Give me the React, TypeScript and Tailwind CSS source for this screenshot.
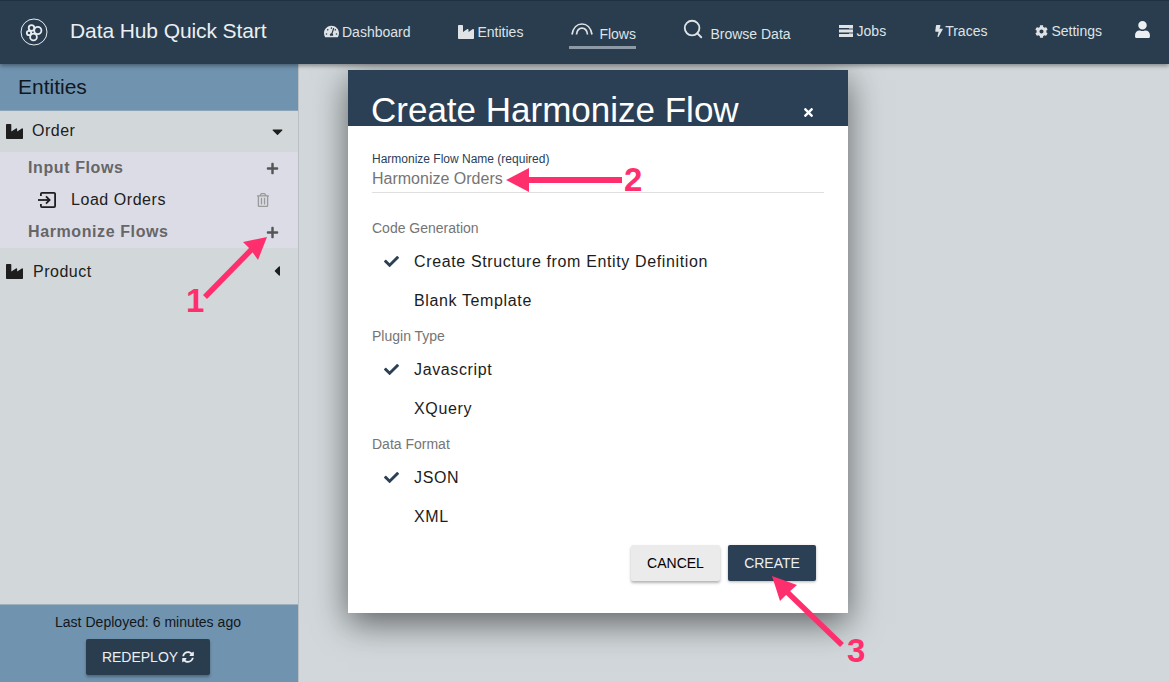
import React from "react";
import { FaTachometerAlt, FaIndustry, FaBolt, FaCog, FaUser, FaRegTrashAlt, FaPlus, FaCheck, FaTimes, FaSyncAlt, FaCaretDown, FaCaretLeft } from "react-icons/fa";
import { Search } from "lucide-react";

const Logo = () => (
  <svg width="28" height="28" viewBox="0 0 28 28" fill="none" stroke="#e8ecef">
    <circle cx="14" cy="14" r="13" strokeWidth="1" />
    <g strokeWidth="1.8">
      <circle cx="11.5" cy="10" r="2.8" />
      <circle cx="17.8" cy="12.5" r="3.6" />
      <circle cx="13.5" cy="19" r="3.4" />
      <circle cx="9" cy="15" r="2.2" />
    </g>
  </svg>
);

const Rainbow = () => (
  <svg width="22" height="12" viewBox="0 0 22 12" fill="none" stroke="#dfe3e6" strokeWidth="1.7">
    <path d="M1 11.5 C2 5 6 1 11 1 C16 1 20 5 21 11.5" />
    <path d="M5.5 11.5 C6 7.5 8 5.2 11 5.2 C14 5.2 16 7.5 16.5 11.5" />
  </svg>
);

const JobsIcon = () => (
  <svg width="14" height="12" viewBox="0 0 14 12" fill="#dfe3e6">
    <rect x="0" y="0" width="14" height="3" />
    <rect x="0" y="4.5" width="14" height="3" />
    <rect x="0" y="9" width="14" height="3" />
    <rect x="10" y="3" width="4" height="1.5" fill="#8d9aa5" />
    <rect x="10" y="7.5" width="4" height="1.5" fill="#8d9aa5" />
  </svg>
);

const LoadIcon = () => (
  <svg width="18" height="16" viewBox="0 0 18 16" fill="none" stroke="#1e1e1e" strokeWidth="1.8">
    <path d="M2.9 4 V2 A1.1 1.1 0 0 1 4 0.9 H16 A1.1 1.1 0 0 1 17.1 2 V14 A1.1 1.1 0 0 1 16 15.1 H4 A1.1 1.1 0 0 1 2.9 14 V12" />
    <path d="M0 8 H11" />
    <path d="M8 4.4 L11.6 8 L8 11.6" />
  </svg>
);

const NavText = ({ children }: { children: React.ReactNode }) => (
  <span className="block text-[14px] leading-[14px] text-[#dfe3e6]">{children}</span>
);

const Annot = ({ children, className }: { children: React.ReactNode; className: string }) => (
  <span className={`absolute font-bold text-[#ff2f6d] text-[33px] leading-none font-['Liberation_Sans',sans-serif] ${className}`}>{children}</span>
);

const Option = ({ label, checked }: { label: string; checked?: boolean }) => (
  <div className="flex items-center h-[39px]">
    <span className="w-[42px] pl-[12px] text-[#2b4055] text-[15px]">{checked && <FaCheck />}</span>
    <span className="text-[16px] tracking-[0.63px] text-[#1c1c1c]">{label}</span>
  </div>
);

const Section = ({ label }: { label: string }) => (
  <div className="text-[14px] leading-[16px] text-[#757575]">{label}</div>
);

export default function App() {
  return (
    <div className="relative w-[1169px] h-[682px] overflow-hidden flex flex-col bg-[#d1d7da] font-['Liberation_Sans',sans-serif]">
      <header className="relative z-10 h-[64px] shrink-0 flex items-center bg-[#293d4f] border-t border-[#1f3040] shadow-[0_2px_4px_rgba(0,0,0,0.35)]">
        <div className="ml-[20px] w-[50px] -mt-[2px]"><Logo /></div>
        <div className="w-[254px] text-[21px] leading-none text-[#eceff1] tracking-[-0.1px] -mt-[4px]">Data Hub Quick Start</div>
        <nav className="flex items-start self-stretch gap-[48px]">
          <div className="mt-[23px] flex items-center gap-[3px]"><FaTachometerAlt className="text-[15px] text-[#dfe3e6]" /><NavText>Dashboard</NavText></div>
          <div className="mt-[23px] -ml-[1px] flex items-center gap-[4px]"><FaIndustry className="text-[16px] text-[#dfe3e6]" /><NavText>Entities</NavText></div>
          <div className="mt-[22px] -ml-[2px] flex flex-col w-[67px]">
            <div className="flex items-start gap-[6px] h-[23px] pl-[2px]"><Rainbow /><span className="mt-[4px]"><NavText>Flows</NavText></span></div>
            <div className="h-[2.5px] bg-[#8d9aa5]"></div>
          </div>
          <div className="mt-[17px] -ml-[2px] flex items-start gap-[6px]"><Search size={22} strokeWidth={2} className="text-[#dfe3e6]" /><span className="mt-[9px]"><NavText>Browse Data</NavText></span></div>
          <div className="mt-[23px] flex items-center gap-[4px]"><JobsIcon /><NavText>Jobs</NavText></div>
          <div className="mt-[23px] -ml-[1px] flex items-center"><FaBolt className="text-[12px] text-[#dfe3e6]" /><NavText>Traces</NavText></div>
          <div className="mt-[23px] flex items-center gap-[3px]"><FaCog className="text-[13px] text-[#dfe3e6]" /><NavText>Settings</NavText></div>
        </nav>
        <FaUser className="ml-[32px] -mt-[7px] text-[17px] text-[#eceff1]" />
      </header>

      <div className="flex flex-1 min-h-0">
        <aside className="w-[299px] shrink-0 flex flex-col bg-[#d2d8da] border-r border-[#b9bfc3]">
          <div className="h-[47px] shrink-0 flex items-center pl-[18px] bg-[#7093af] text-[21px] text-[#10171d] border-b border-[#8ba3b5]">Entities</div>
          <div className="h-[41px] shrink-0 flex items-center pl-[6px] pr-[12px]">
            <FaIndustry className="text-[17px] text-[#1e1e1e]" />
            <span className="ml-[9px] text-[16px] tracking-[0.5px] text-[#202020] -mt-[1px]">Order</span>
            <FaCaretDown className="ml-auto text-[17px] text-[#1e1e1e]" />
          </div>
          <div className="h-[96px] shrink-0 bg-[#dcdce6] flex flex-col">
            <div className="h-[32px] flex items-center pl-[28px] pr-[19px]">
              <span className="text-[16px] font-bold text-[#666] tracking-[0.6px]">Input Flows</span>
              <FaPlus className="ml-auto text-[13px] text-[#555]" />
            </div>
            <div className="h-[32px] flex items-center pl-[38px] pr-[28px]">
              <LoadIcon />
              <span className="ml-[15px] text-[16px] tracking-[0.55px] text-[#202020]">Load Orders</span>
              <FaRegTrashAlt className="ml-auto text-[14px] text-[#999]" />
            </div>
            <div className="h-[32px] flex items-center pl-[28px] pr-[19px]">
              <span className="text-[16px] font-bold text-[#666] tracking-[0.6px]">Harmonize Flows</span>
              <FaPlus className="ml-auto text-[13px] text-[#555]" />
            </div>
          </div>
          <div className="h-[46px] shrink-0 flex items-center pl-[6px] pr-[13px]">
            <FaIndustry className="text-[17px] text-[#1e1e1e]" />
            <span className="ml-[10px] mt-[1px] text-[16px] tracking-[0.5px] text-[#202020]">Product</span>
            <FaCaretLeft className="ml-auto text-[16px] text-[#1e1e1e]" />
          </div>
          <div className="mt-auto h-[78px] shrink-0 bg-[#7093af] border-t border-[#9fb1bf] flex flex-col items-center pt-[8px] pr-[2px]">
            <div className="text-[14px] leading-[18px] tracking-[0.03px] text-[#10171d]">Last Deployed: 6 minutes ago</div>
            <button className="mt-[8px] w-[124px] h-[36px] rounded-[2px] bg-[#293d4f] text-[#eceff1] text-[14px] flex items-center justify-center gap-[4px] shadow-[0_2px_3px_rgba(0,0,0,0.3)]">
              REDEPLOY <FaSyncAlt className="text-[12px]" />
            </button>
          </div>
        </aside>
        <main className="flex-1 relative">
          <div className="absolute left-[49px] top-[6px] w-[500px] h-[543px] bg-white flex flex-col shadow-[0_10px_32px_rgba(0,0,0,0.55)]">
            <div className="relative h-[56px] shrink-0 bg-[#2b4055] pl-[23px] pt-[24px]">
              <div className="text-[35px] leading-[32px] text-white">Create Harmonize Flow</div>
              <FaTimes className="absolute left-[454px] top-[36px] text-[13px] text-white" />
            </div>
            <div className="flex-1 px-[24px] flex flex-col">
              <div className="mt-[26px] w-[452px] border-b border-[#e0e0e0] h-[41px]">
                <div className="text-[12px] leading-[14px] text-[#2b4055]">Harmonize Flow Name (required)</div>
                <div className="mt-[3px] text-[16px] leading-[20px] text-[#757575]">Harmonize Orders</div>
              </div>
              <div className="mt-[27px]"><Section label="Code Generation" /></div>
              <div className="mt-[6px]">
                <Option label="Create Structure from Entity Definition" checked />
                <Option label="Blank Template" />
              </div>
              <div className="mt-[8px]"><Section label="Plugin Type" /></div>
              <div className="mt-[6px]">
                <Option label="Javascript" checked />
                <Option label="XQuery" />
              </div>
              <div className="mt-[8px]"><Section label="Data Format" /></div>
              <div className="mt-[6px]">
                <Option label="JSON" checked />
                <Option label="XML" />
              </div>
              <div className="flex justify-end gap-[8px] mt-[9px] pr-[8px]">
                <button className="w-[89px] h-[36px] rounded-[2px] bg-[#ebebeb] text-[14px] text-black shadow-[0_2px_3px_rgba(0,0,0,0.3)]">CANCEL</button>
                <button className="w-[88px] h-[36px] rounded-[2px] bg-[#2b4055] text-[14px] text-[#eceff1] shadow-[0_1px_3px_rgba(0,0,0,0.3)]">CREATE</button>
              </div>
            </div>
          </div>
        </main>
      </div>

      <svg className="absolute left-0 top-0 z-20 pointer-events-none" width="1169" height="682" viewBox="0 0 1169 682">
        <g fill="#ff2f6d" stroke="none">
          <path d="M205 297 L252 249" stroke="#ff2f6d" strokeWidth="5.5" fill="none" />
          <path d="M267 237 L243 242 L251 250 L258 260 Z" />
          <path d="M525 180 L622 180" stroke="#ff2f6d" strokeWidth="6" fill="none" />
          <path d="M506 180 L529 168 L529 192 Z" />
          <path d="M842 645 L786 591" stroke="#ff2f6d" strokeWidth="5.5" fill="none" />
          <path d="M772 576 L797 585 L788 593 L780 601 Z" />
        </g>
      </svg>
      <Annot className="z-20 left-[186px] top-[284px]">1</Annot>
      <Annot className="z-20 left-[624px] top-[163px]">2</Annot>
      <Annot className="z-20 left-[847px] top-[634px]">3</Annot>
    </div>
  );
}
